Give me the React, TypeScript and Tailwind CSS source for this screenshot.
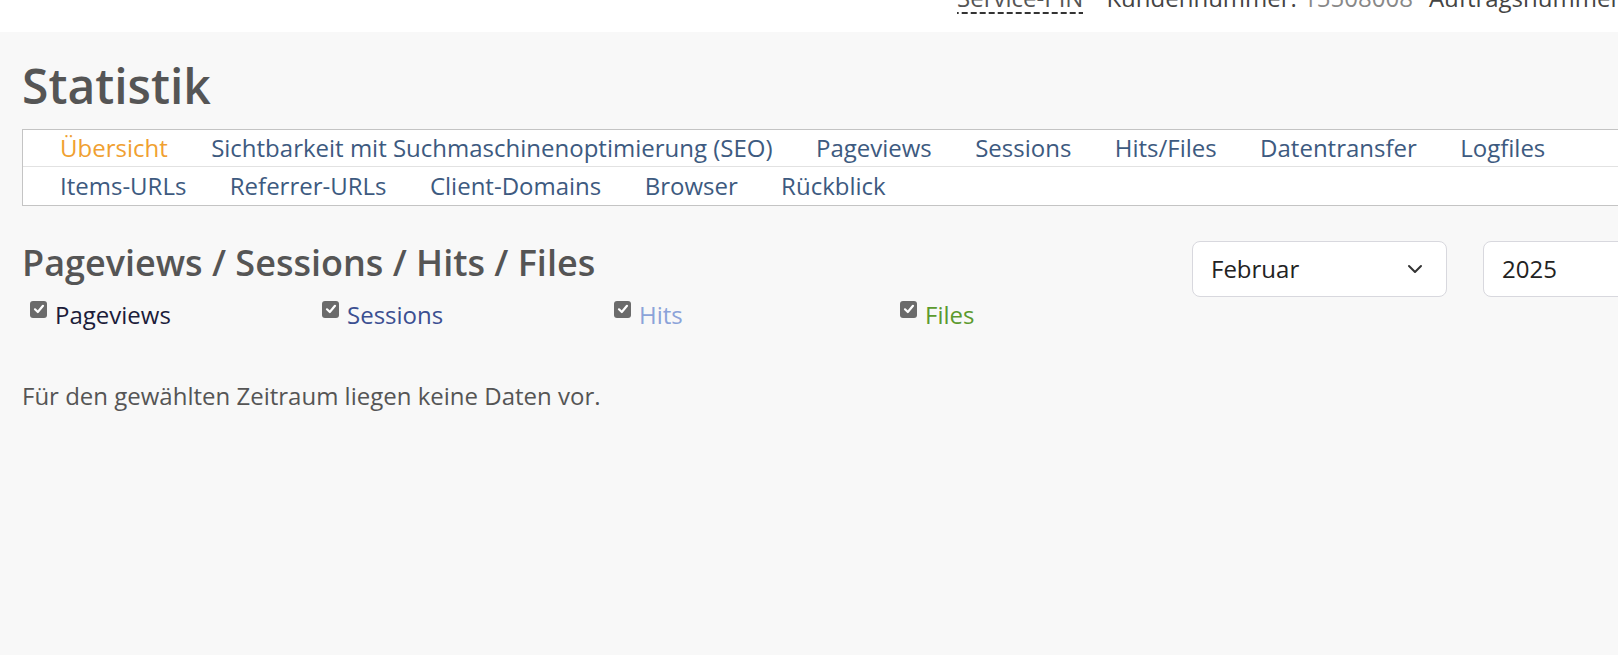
export default function App() {
  const row1 = [
    "Sichtbarkeit mit Suchmaschinenoptimierung (SEO)",
    "Pageviews",
    "Sessions",
    "Hits/Files",
    "Datentransfer",
    "Logfiles",
  ];
  const row2 = ["Items-URLs", "Referrer-URLs", "Client-Domains", "Browser", "Rückblick"];
  const checks = [
    { label: "Pageviews", color: "text-[#1c1c3a]", w: "w-[292px]" },
    { label: "Sessions", color: "text-[#3b4f91]", w: "w-[292px]" },
    { label: "Hits", color: "text-[#8ba3d9]", w: "w-[286px]" },
    { label: "Files", color: "text-[#5b9a2e]", w: "w-[200px]" },
  ];

  return (
    <div className="w-full h-[655px] overflow-hidden bg-[#f8f8f8] font-['Open_Sans',sans-serif]">
      <header className="h-[32px] bg-white flex items-end overflow-hidden">
        <div className="ml-[957px] pb-[18px] flex items-baseline whitespace-nowrap text-[24px] leading-[28px]">
          <span className="pb-[2px] text-[#555] bg-[linear-gradient(to_right,#333_72%,transparent_72%)] bg-[length:9px_2px] bg-repeat-x bg-bottom">
            Service-PIN
          </span>
          <span className="ml-[23px] text-[#444]">
            Kundennummer: <span className="text-[#888]">15508008</span>
          </span>
          <span className="ml-[16px] text-[#444]">Auftragsnummer: 2874519</span>
        </div>
      </header>

      <main className="w-[1760px] px-[22px]">
        <h1 className="mt-[25px] text-[48px] leading-[57.6px] font-semibold text-[#555]">Statistik</h1>

        <nav className="mt-[14px] bg-white border border-[#c4c4c4] text-[24px] leading-[36px] text-[#3d5a80]">
          <div className="h-[37px] border-b border-[#e2e2e2] flex gap-[43.4px] pl-[37px] whitespace-nowrap">
            <span className="text-[#f0a030]">Übersicht</span>
            {row1.map((t) => (
              <span key={t}>{t}</span>
            ))}
          </div>
          <div className="h-[38px] pt-[1px] flex gap-[43.4px] pl-[37px] whitespace-nowrap">
            {row2.map((t) => (
              <span key={t}>{t}</span>
            ))}
          </div>
        </nav>

        <div className="mt-[35px] flex justify-between items-start">
          <div>
            <h2 className="text-[36px] leading-[43px] font-semibold text-[#555]">
              Pageviews / Sessions / Hits / Files
            </h2>
            <div className="mt-[13px] flex pl-[8px] text-[24px] leading-[36px]">
              {checks.map((c) => (
                <label key={c.label} className={`${c.w} flex items-start gap-[8px]`}>
                  <span className="mt-[4px] w-[17px] h-[17px] rounded-[3px] bg-[#6b6b6b] flex items-center justify-center">
                    <svg width="12" height="12" viewBox="0 0 12 12">
                      <path d="M2 6.3 L4.8 9 L10 2.8" fill="none" stroke="#fff" strokeWidth="2.2" strokeLinecap="round" strokeLinejoin="round" />
                    </svg>
                  </span>
                  <span className={c.color}>{c.label}</span>
                </label>
              ))}
            </div>
          </div>

          <div className="flex gap-[36px]">
            <div className="w-[255px] h-[56px] bg-white border border-[#d8d8de] rounded-[8px] flex items-center justify-between pl-[18px] pr-[23px] text-[24px] text-[#222]">
              <span>Februar</span>
              <svg width="16" height="10" viewBox="0 0 16 10">
                <path d="M2 2 L8 8 L14 2" fill="none" stroke="#333" strokeWidth="2" strokeLinecap="round" strokeLinejoin="round" />
              </svg>
            </div>
            <div className="w-[255px] h-[56px] bg-white border border-[#d8d8de] rounded-[8px] flex items-center justify-between pl-[18px] pr-[23px] text-[24px] text-[#222]">
              <span>2025</span>
              <svg width="16" height="10" viewBox="0 0 16 10">
                <path d="M2 2 L8 8 L14 2" fill="none" stroke="#333" strokeWidth="2" strokeLinecap="round" strokeLinejoin="round" />
              </svg>
            </div>
          </div>
        </div>

        <p className="mt-[45px] text-[24px] leading-[36px] text-[#555]">
          Für den gewählten Zeitraum liegen keine Daten vor.
        </p>
      </main>
    </div>
  );
}
